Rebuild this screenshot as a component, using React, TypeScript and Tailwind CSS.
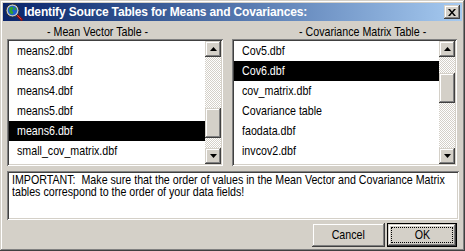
import React from "react";

const raised =
  "shadow-[inset_-1px_-1px_#404040,inset_1px_1px_#D4D0C8,inset_-2px_-2px_#808080,inset_2px_2px_#ffffff]";
const sunken =
  "shadow-[inset_1px_1px_#808080,inset_-1px_-1px_#ffffff,inset_2px_2px_#404040,inset_-2px_-2px_#D4D0C8]";
const checker =
  "bg-[conic-gradient(#ffffff_25%,#D4D0C8_0_50%,#ffffff_0_75%,#D4D0C8_0)] bg-[length:2px_2px]";
const font = "font-['Liberation_Sans',Arial,sans-serif]";

function N({ children, center }: { children: React.ReactNode; center?: boolean }) {
  return (
    <span
      className={`inline-block whitespace-nowrap scale-x-[0.82] ${center ? "origin-center" : "origin-left"}`}
    >
      {children}
    </span>
  );
}

function Arrow({ up }: { up?: boolean }) {
  return (
    <svg width="7" height="4" viewBox="0 0 7 4">
      {up ? <polygon points="3.5,0 7,4 0,4" fill="#000" /> : <polygon points="0,0 7,0 3.5,4" fill="#000" />}
    </svg>
  );
}

function ScrollBar({ before }: { before: number }) {
  return (
    <div className="flex w-[16px] shrink-0 flex-col">
      <div className={`flex h-[16px] w-[16px] items-center justify-center bg-[#D4D0C8] ${raised}`}>
        <Arrow up />
      </div>
      <div className={`${checker}`} style={{ height: before }} />
      <div className={`h-[30px] w-[16px] bg-[#D4D0C8] ${raised}`} />
      <div className={`flex-1 ${checker}`} />
      <div className={`flex h-[16px] w-[16px] items-center justify-center bg-[#D4D0C8] ${raised}`}>
        <Arrow />
      </div>
    </div>
  );
}

function ListBox({
  items,
  selected,
  width,
  before,
}: {
  items: string[];
  selected: number;
  width: string;
  before: number;
}) {
  return (
    <div className={`flex h-[127px] bg-white p-[2px] ${sunken} ${width}`}>
      <div className="flex min-w-0 flex-1 flex-col overflow-hidden">
        {items.map((it, i) => (
          <div
            key={it}
            className={`h-[20px] shrink-0 overflow-hidden pl-[8px] text-[13px] leading-[20px] ${
              i === selected ? "bg-black text-white" : "text-black"
            }`}
          >
            <N>{it}</N>
          </div>
        ))}
      </div>
      <ScrollBar before={before} />
    </div>
  );
}

function TitleIcon() {
  return (
    <svg width="18" height="18" viewBox="0 0 18 18">
      <line x1="11" y1="11" x2="16.5" y2="16.5" stroke="#8a1010" strokeWidth="2.6" strokeLinecap="round" />
      <line x1="11" y1="11" x2="16" y2="16" stroke="#e04040" strokeWidth="1" strokeLinecap="round" />
      <circle cx="7.5" cy="7.5" r="6.5" fill="#c8c8c8" stroke="#303030" strokeWidth="1" />
      <circle cx="7.5" cy="7.5" r="4.8" fill="#1f5fd0" />
      <path d="M4.5 4.5 L7.5 3.5 L8.5 5.5 L7 7.5 L8.5 9.5 L7 11.5 L5 10 L4 7 Z" fill="#2fa030" />
      <path d="M9.5 4 L11.5 5.5 L11 7.5 L9.5 7 Z" fill="#2fa030" />
    </svg>
  );
}

export default function App() {
  return (
    <div
      className={`relative flex h-[251px] w-[465px] flex-col overflow-hidden bg-[#D4D0C8] p-[3px] ${raised} ${font} text-black`}
    >
      {/* Title bar */}
      <div className="flex h-[18px] items-center bg-gradient-to-r from-[#0A246A] to-[#A6CAF0] pl-[2px] pr-[2px]">
        <TitleIcon />
        <div className="ml-[1px] flex-1 text-[12px] font-bold leading-[18px] tracking-[-0.15px] text-white">
          Identify Source Tables for Means and Covariances:
        </div>
        <div className={`flex h-[14px] w-[16px] items-center justify-center bg-[#D4D0C8] ${raised}`}>
          <svg width="8" height="7" viewBox="0 0 8 7">
            <path d="M0 0 L2 0 L4 2.5 L6 0 L8 0 L5 3.5 L8 7 L6 7 L4 4.5 L2 7 L0 7 L3 3.5 Z" fill="#000" />
          </svg>
        </div>
      </div>

      {/* Body */}
      <div className="flex flex-1 flex-col px-[4px] pt-[4px]">
        <div className="flex gap-[9px]">
          <div className="flex flex-col">
            <div className="h-[14px] overflow-hidden pl-[40px] text-[13px] leading-[14px]">
              <N>- Mean Vector Table -</N>
            </div>
            <ListBox
              width="w-[216px]"
              items={["means2.dbf", "means3.dbf", "means4.dbf", "means5.dbf", "means6.dbf", "small_cov_matrix.dbf"]}
              selected={4}
              before={51}
            />
          </div>
          <div className="flex flex-col">
            <div className="h-[14px] overflow-hidden pl-[67px] text-[13px] leading-[14px]">
              <N>- Covariance Matrix Table -</N>
            </div>
            <ListBox
              width="w-[225px]"
              items={["Cov5.dbf", "Cov6.dbf", "cov_matrix.dbf", "Covariance table", "faodata.dbf", "invcov2.dbf"]}
              selected={1}
              before={16}
            />
          </div>
        </div>

        <div
          className={`mt-[5px] h-[49px] w-[452px] overflow-hidden bg-white px-[5px] pt-[3px] text-[13px] leading-[12px] ${sunken}`}
        >
          <N>
            IMPORTANT:&nbsp; Make sure that the order of values in the Mean Vector and Covariance Matrix
            <br />
            tables correspond to the order of your data fields!
          </N>
        </div>

        <div className="mt-[3px] flex justify-end gap-[2px] pr-[1px]">
          <div className={`flex h-[24px] w-[73px] items-center justify-center bg-[#D4D0C8] text-[13px] ${raised}`}>
            <N center>Cancel</N>
          </div>
          <div className="h-[24px] w-[70px] border border-black">
            <div
              className={`flex h-full w-full items-center justify-center bg-[#D4D0C8] p-[3px] text-[13px] ${raised}`}
            >
              <div className="flex h-full w-full items-center justify-center border border-dotted border-black">
                <N center>OK</N>
              </div>
            </div>
          </div>
        </div>
      </div>
    </div>
  );
}
